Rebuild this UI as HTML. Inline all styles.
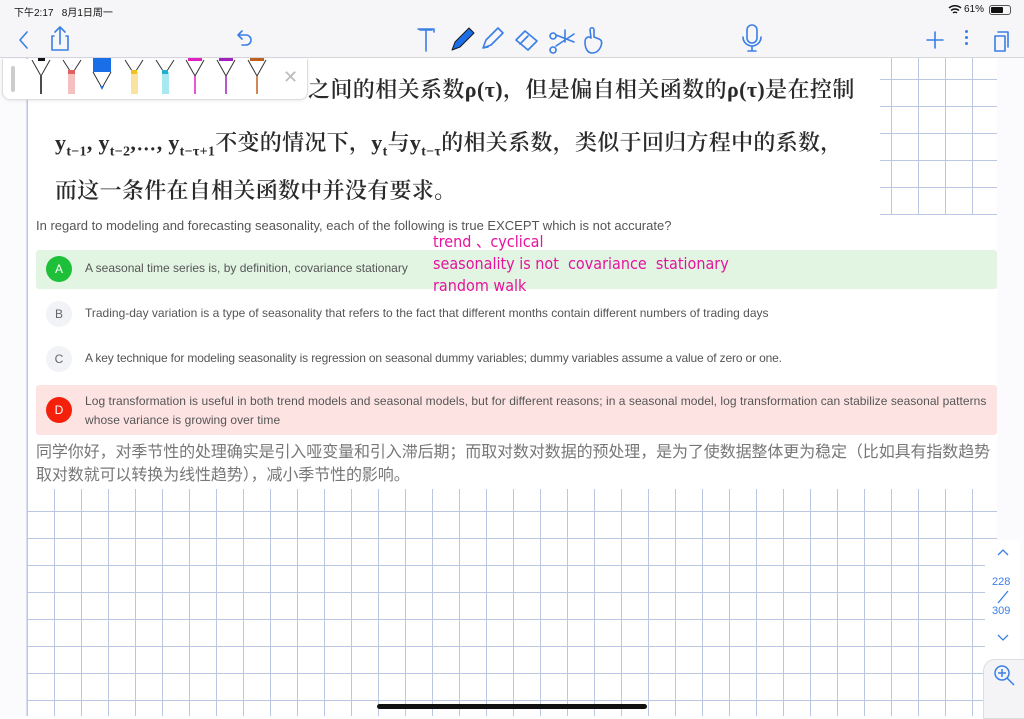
<!DOCTYPE html>
<html><head><meta charset="utf-8">
<style>
*{margin:0;padding:0;box-sizing:border-box}
body{width:1024px;height:716px;overflow:hidden;position:relative;background:#fff;font-family:"Liberation Sans","Noto Sans CJK SC",sans-serif}
.abs{position:absolute}
.grid{background-color:#fff;background-image:linear-gradient(#b9c7e2 1px,transparent 1px),linear-gradient(90deg,#b9c7e2 1px,transparent 1px);background-size:27px 27px}
</style></head><body>
<div class="abs grid" style="left:27px;top:58px;width:970px;height:658px;background-position:0 -33px"></div>
<div class="abs" style="left:0;top:58px;width:27px;height:658px;background:#fbfbfd;border-right:1px solid #d8def0"></div>
<div class="abs" style="left:997px;top:58px;width:27px;height:658px;background:#fbfbfd"></div>
<div class="abs" style="left:28px;top:58px;width:852px;height:157px;background:#fff;font-family:'Liberation Serif','Noto Serif CJK SC',serif;color:#2a2a2a;font-size:22px;font-weight:600">
  <div class="abs" style="left:27px;top:68px;white-space:nowrap;letter-spacing:0.3px">y<sub style="font-size:14px">t−1</sub>, y<sub style="font-size:14px">t−2</sub>,⋯, y<sub style="font-size:14px">t−τ+1</sub>不变的情况下，y<sub style="font-size:14px">t</sub>与y<sub style="font-size:14px">t−τ</sub>的相关系数，类似于回归方程中的系数，</div>
  <div class="abs" style="left:27px;top:116px;white-space:nowrap;letter-spacing:0.3px">而这一条件在自相关函数中并没有要求。</div>
  <div class="abs" style="left:280px;top:15px;white-space:nowrap;letter-spacing:0.4px">之间的相关系数ρ(τ)，但是偏自相关函数的ρ(τ)是在控制</div>
</div>
<div class="abs" style="left:28px;top:215px;width:969px;height:274px;background:#fff"></div>
<div class="abs" style="left:36px;top:218px;font-size:13px;color:#555">In regard to modeling and forecasting seasonality, each of the following is true EXCEPT which is not accurate?</div>
<div class="abs" style="left:36px;top:250px;width:961px;height:39px;background:#e2f5e3;border-radius:3px"></div>
<div class="abs" style="left:46px;top:256px;width:26px;height:26px;border-radius:50%;background:#1ec03a;color:#fff;font-size:12px;text-align:center;line-height:26px">A</div>
<div class="abs" style="left:85px;top:261px;font-size:12px;color:#555">A seasonal time series is, by definition, covariance stationary</div>
<div class="abs" style="left:46px;top:301px;width:26px;height:26px;border-radius:50%;background:#f2f3f6;color:#666;font-size:12px;text-align:center;line-height:26px">B</div>
<div class="abs" style="left:85px;top:306px;font-size:12px;color:#555">Trading-day variation is a type of seasonality that refers to the fact that different months contain different numbers of trading days</div>
<div class="abs" style="left:46px;top:346px;width:26px;height:26px;border-radius:50%;background:#f2f3f6;color:#666;font-size:12px;text-align:center;line-height:26px">C</div>
<div class="abs" style="left:85px;top:351px;font-size:12px;color:#555;letter-spacing:-0.15px">A key technique for modeling seasonality is regression on seasonal dummy variables; dummy variables assume a value of zero or one.</div>
<div class="abs" style="left:36px;top:385px;width:961px;height:50px;background:#fde4e3;border-radius:3px"></div>
<div class="abs" style="left:46px;top:397px;width:26px;height:26px;border-radius:50%;background:#f5200c;color:#fff;font-size:12px;text-align:center;line-height:26px">D</div>
<div class="abs" style="left:85px;top:392px;width:910px;font-size:12px;color:#555;line-height:19px;letter-spacing:0.05px">Log transformation is useful in both trend models and seasonal models, but for different reasons; in a seasonal model, log transformation can stabilize seasonal patterns whose variance is growing over time</div>
<div class="abs" style="left:36px;top:441px;font-size:16px;color:#777;line-height:23px;white-space:nowrap;letter-spacing:-0.1px">同学你好，对季节性的处理确实是引入哑变量和引入滞后期；而取对数对数据的预处理，是为了使数据整体更为稳定（比如具有指数趋势<br>取对数就可以转换为线性趋势），减小季节性的影响。</div>
<div class="abs" style="left:433px;top:231px;color:#e5139c;font-size:16px;font-family:'DejaVu Sans',sans-serif;line-height:22px;white-space:nowrap;transform:scaleX(.9);transform-origin:left">trend 、cyclical<br>seasonality is not &nbsp;covariance &nbsp;stationary<br>random walk</div>
<div class="abs" style="left:0;top:0;width:1024px;height:58px;background:#f6f6f8;border-bottom:1px solid #d5d5da"></div>
<div class="abs" style="left:14px;top:4px;font-size:10px;color:#111">下午2:17 &nbsp; 8月1日周一</div>
<div class="abs" style="left:964px;top:4px;font-size:10px;color:#111">61%</div>
<div class="abs" style="left:989px;top:5px;width:22px;height:10px;border:1px solid #555;border-radius:3px"><div style="width:12px;height:6px;margin:1px;background:#111;border-radius:1px"></div></div>
<svg class="abs" style="left:948px;top:4px" width="14" height="11" viewBox="0 0 14 11"><path d="M1 4a9 9 0 0 1 12 0M3 6.5a6 6 0 0 1 8 0M5 9a3 3 0 0 1 4 0" stroke="#111" stroke-width="1.5" fill="none"/></svg>
<svg class="abs" style="left:0;top:22px" width="1024" height="36" viewBox="0 0 1024 36" fill="none" stroke="#3b7fe6" stroke-width="1.6" stroke-linecap="round" stroke-linejoin="round">
<path d="M27 10l-7 8 7 8"/>
<path d="M54 14h-2v14h16V14h-2M60 22V5M55 10l5-5 5 5"/>
<path d="M238 13h8a5 5 0 0 1 0 10h-4M238 13l4-4M238 13l4 4"/>
<path d="M418 7h16v3M426 7v22M420 8h12"/>
<path d="M452 28l3-8 14-14 5 5-14 14z" fill="#1a6fe8" stroke="#1a1a1a" stroke-width="1"/>
<path d="M483 26l3-8 12-12 5 5-12 12z M483 26l5-1"/>
<path d="M516 18l9-9 12 10-9 9z M520 22l8-8"/>
<path d="M553 11a3 3 0 1 0 .1 0M553 25a3 3 0 1 0 .1 0M556 13l18 7M556 24l18-12M565 8v12"/>
<path d="M585 20c0-5 4-6 6-4l-1-8c0-3 4-3 4 0v7l5 2c3 1 3 4 2 7-2 5-5 7-9 7s-7-4-7-11z"/>
<path d="M747 8a5 5 0 0 1 10 0v8a5 5 0 0 1-10 0zM743 15a9 9 0 0 0 18 0M752 25v4M748 29h8"/>
<path d="M935 10v16M927 18h16"/>
<path d="M995 14h10v15H995zM998 10h10v15"/>
</svg>
<div class="abs" style="left:965px;top:30px;width:3px;height:3px;border-radius:50%;background:#3b7fe6;box-shadow:0 6px 0 #3b7fe6,0 12px 0 #3b7fe6"></div>
<div class="abs" style="left:2px;top:59px;width:306px;height:41px;background:#fff;border:1px solid #ddd;border-top:none;border-radius:0 0 8px 8px;box-shadow:0 1px 3px rgba(0,0,0,.08)"></div>
<div class="abs" style="left:11px;top:66px;width:4px;height:26px;background:#ccc;border-radius:2px"></div>
<svg class="abs" style="left:20px;top:58px" width="250" height="40" viewBox="0 0 250 40" fill="none" stroke="#333" stroke-width="1">
<path d="M12 2l9 16 9-16"/><rect x="18" y="0" width="7" height="3" fill="#111" stroke="none"/><path d="M21 18v18" stroke="#111" stroke-width="1.5"/>
<path d="M43 2l9 14 9-14"/><rect x="48" y="14" width="7" height="22" fill="#f4c0c0" stroke="none"/><rect x="48" y="12" width="7" height="4" fill="#e06060" stroke="none"/>
<rect x="73" y="0" width="18" height="14" fill="#1a6fe8" stroke="none"/><path d="M73 14l9 16 9-16"/><path d="M80 28h4l-2 4z" fill="#1a6fe8" stroke="none"/>
<path d="M105 2l9 14 9-14"/><rect x="111" y="14" width="7" height="22" fill="#fae3a0" stroke="none"/><rect x="111" y="12" width="6" height="4" fill="#f0c020" stroke="none"/>
<path d="M136 2l9 14 9-14"/><rect x="142" y="14" width="7" height="22" fill="#a8e8f0" stroke="none"/><rect x="142" y="12" width="6" height="4" fill="#20b0d0" stroke="none"/>
<path d="M166 2l9 16 9-16"/><path d="M175 18v18" stroke="#e020c0" stroke-width="1.5"/><rect x="168" y="0" width="14" height="3" fill="#e020c0" stroke="none"/>
<path d="M197 2l9 16 9-16"/><path d="M206 18v18" stroke="#a020c0" stroke-width="1.5"/><rect x="199" y="0" width="14" height="3" fill="#a020c0" stroke="none"/>
<path d="M228 2l9 16 9-16"/><path d="M237 18v18" stroke="#c06020" stroke-width="1.5"/><rect x="230" y="0" width="14" height="3" fill="#c06020" stroke="none"/>
</svg>
<div class="abs" style="left:283px;top:67px;font-size:18px;color:#bbb">✕</div>
<div class="abs" style="left:985px;top:540px;width:35px;height:120px;background:#fff"></div>
<svg class="abs" style="left:995px;top:545px" width="16" height="100" viewBox="0 0 16 100" fill="none" stroke="#3b7fe6" stroke-width="1.3"><path d="M3 10l5-5 5 5M3 90l5 5 5-5M13 46L3 58"/></svg>
<div class="abs" style="left:992px;top:576px;font-size:11px;color:#3b7fe6">228</div>
<div class="abs" style="left:992px;top:605px;font-size:11px;color:#3b7fe6">309</div>
<div class="abs" style="left:983px;top:659px;width:45px;height:60px;background:#f4f4f7;border:1px solid #ddd;border-radius:12px 0 0 0"></div>
<svg class="abs" style="left:993px;top:664px" width="24" height="24" viewBox="0 0 24 24" fill="none" stroke="#3b7fe6" stroke-width="1.5"><circle cx="9" cy="9" r="7"/><path d="M9 5v8M5 9h8M14 14l7 7"/></svg>
<div class="abs" style="left:377px;top:704px;width:270px;height:5px;background:#111;border-radius:3px"></div>
</body></html>
